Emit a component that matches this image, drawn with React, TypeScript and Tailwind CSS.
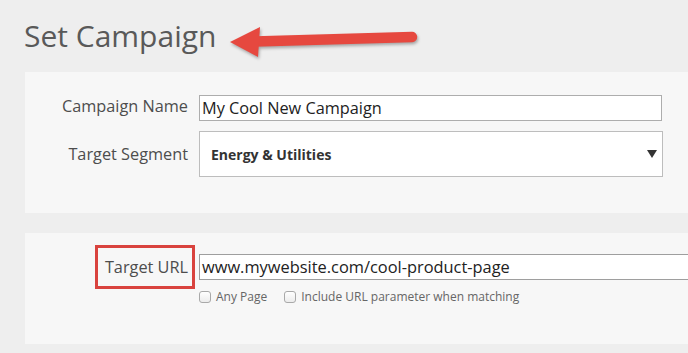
import React from "react";

function Check({ label }: { label: string }) {
  return (
    <label className="flex items-center gap-[5px]">
      <span className="block h-[12px] w-[12px] shrink-0 rounded-[3px] border border-[#a9a9a9] bg-gradient-to-b from-white to-[#ececec]" />
      <span className="text-[12px] text-[#666]">{label}</span>
    </label>
  );
}

export default function App() {
  return (
    <div
      className="relative h-[353px] w-[688px] overflow-hidden bg-[#eeeeee]"
      style={{ fontFamily: '"Open Sans", "Noto Sans", sans-serif' }}
    >
      <div className="pl-[24px] pt-[14px] h-[72px]">
        <h1 className="text-[30px] leading-[44px] text-[#595959]">Set Campaign</h1>
      </div>

      <svg
        className="absolute left-0 top-0"
        width="688"
        height="80"
        viewBox="0 0 688 80"
        style={{ filter: "drop-shadow(1px 2px 1.5px rgba(0,0,0,0.3))" }}
      >
        <line x1="255" y1="41.5" x2="412" y2="37" stroke="#e6483f" strokeWidth="10.5" strokeLinecap="round" />
        <polygon points="230,42 260,27 258,57" fill="#e6483f" />
      </svg>

      <div className="ml-[25px] h-[141px] bg-[#f7f7f7] pt-[23px]">
        <div className="flex items-start">
          <div className="w-[163px] shrink-0 text-right text-[16.3px] leading-[22px] text-[#4d4d4d]">Campaign Name</div>
          <div className="ml-[11px] flex h-[26px] w-[463px] shrink-0 items-center border border-[#adadad] bg-white pl-[2px] text-[16.3px] text-[#222]">
            My Cool New Campaign
          </div>
        </div>
        <div className="mt-[10px] flex items-center">
          <div className="w-[163px] shrink-0 text-right text-[16.3px] text-[#4d4d4d]">Target Segment</div>
          <div className="ml-[11px] flex h-[46px] w-[464px] shrink-0 items-center justify-between border border-[#bdbdbd] bg-white pl-[11px] pr-[5px]">
            <span className="text-[14px] font-bold text-[#333]">Energy &amp; Utilities</span>
            <svg width="10" height="8" viewBox="0 0 10 8">
              <polygon points="0,0 10,0 5,8" fill="#333" />
            </svg>
          </div>
        </div>
      </div>

      <div className="ml-[25px] mt-[20px] h-[111px] bg-[#f7f7f7] pt-[12px]">
        <div className="flex items-center">
          <div className="ml-[70px] flex h-[44px] w-[100px] shrink-0 items-center justify-end border-[3px] border-[#d9433e] pr-[4px] text-[16.3px] text-[#4d4d4d]">
            Target URL
          </div>
          <div className="ml-[4px] flex h-[26px] w-[520px] shrink-0 items-center border-y border-l border-[#9e9e9e] bg-white pl-[2px] text-[16.4px] text-[#222]">
            www.mywebsite.com/cool-product-page
          </div>
        </div>
        <div className="ml-[174px] mt-[-1px] flex items-center gap-[17px]">
          <Check label="Any Page" />
          <Check label="Include URL parameter when matching" />
        </div>
      </div>
    </div>
  );
}
